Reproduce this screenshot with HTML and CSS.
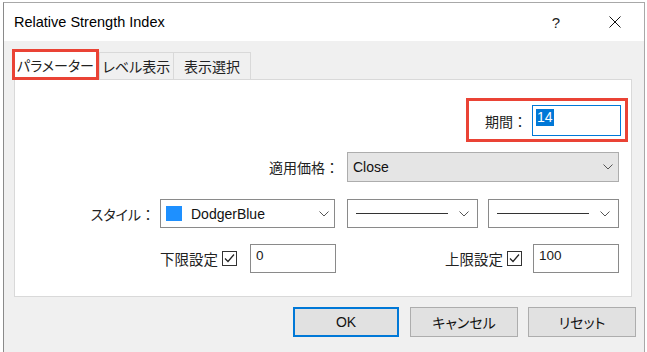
FILE: index.html
```html
<!DOCTYPE html>
<html lang="ja">
<head>
<meta charset="utf-8">
<link rel="stylesheet" href="styles.css">
</head>
<body>
<div class="window">
  <div class="titlebar">
    <span class="title">Relative Strength Index</span>
    <span class="help">?</span>
    <svg class="close" width="12" height="12" viewBox="0 0 12 12"><path d="M0.5 0.5L11.5 11.5M11.5 0.5L0.5 11.5" stroke="#111" stroke-width="1" fill="none"/></svg>
  </div>
  <div class="body">
    <div class="tabs">
      <div class="tab active"><span class="kana">パラメーター</span></div>
      <div class="tab t2"><span class="kana">レベル表示</span></div>
      <div class="tab t3">表示選択</div>
    </div>
    <div class="panel">
      <div class="row row1">
        <div class="mark">
          <span class="label">期間：</span>
          <div class="field period"><span class="sel">14</span></div>
        </div>
      </div>
      <div class="row row2">
        <span class="label">適用価格：</span>
        <div class="combo gray w-close"><span class="val">Close</span>
          <svg class="chev" width="10" height="6" viewBox="0 0 10 6"><path d="M0.5 0.5L5 5L9.5 0.5" stroke="#555" fill="none"/></svg>
        </div>
      </div>
      <div class="row row3">
        <span class="label"><span class="kana">スタイル</span>：</span>
        <div class="combo w-color"><span class="swatch"></span><span class="val">DodgerBlue</span>
          <svg class="chev" width="10" height="6" viewBox="0 0 10 6"><path d="M0.5 0.5L5 5L9.5 0.5" stroke="#555" fill="none"/></svg>
        </div>
        <div class="combo w-line"><span class="line"></span>
          <svg class="chev" width="10" height="6" viewBox="0 0 10 6"><path d="M0.5 0.5L5 5L9.5 0.5" stroke="#555" fill="none"/></svg>
        </div>
        <div class="combo w-line last"><span class="line"></span>
          <svg class="chev" width="10" height="6" viewBox="0 0 10 6"><path d="M0.5 0.5L5 5L9.5 0.5" stroke="#555" fill="none"/></svg>
        </div>
      </div>
      <div class="row row4">
        <div class="group g1">
          <span class="label">下限設定</span>
          <svg class="check" width="15" height="15" viewBox="0 0 15 15"><rect x="0.5" y="0.5" width="14" height="14" fill="#fff" stroke="#333"/><path d="M3 7.5L6 10.5L12 3.5" stroke="#222" stroke-width="1.2" fill="none"/></svg>
          <div class="field num"><span>0</span></div>
        </div>
        <div class="group">
          <span class="label">上限設定</span>
          <svg class="check" width="15" height="15" viewBox="0 0 15 15"><rect x="0.5" y="0.5" width="14" height="14" fill="#fff" stroke="#333"/><path d="M3 7.5L6 10.5L12 3.5" stroke="#222" stroke-width="1.2" fill="none"/></svg>
          <div class="field num"><span>100</span></div>
        </div>
      </div>
    </div>
    <div class="buttons">
      <div class="btn default">OK</div>
      <div class="btn b2"><span class="kana">キャンセル</span></div>
      <div class="btn b3"><span class="kana">リセット</span></div>
    </div>
  </div>
</div>
</body>
</html>
```

FILE: styles.css
```css
* { box-sizing: border-box; }
html, body { margin: 0; padding: 0; background: #fff; }
body {
  font-family: "Liberation Sans", "Noto Sans CJK JP", sans-serif;
  font-size: 14px;
  color: #1a1a1a;
  overflow: hidden;
  height: 352px;
}
.kana { font-feature-settings: "palt"; }
.window {
  margin: 2px 0 0 3px;
  width: 642px;
  height: 350px;
  border: 1px solid #a8a8a8;
  border-left-color: #8a8a8a;
  border-bottom: none;
  background: #f0f0f0;
  display: flex;
  flex-direction: column;
  overflow: hidden;
}
.titlebar {
  height: 38px;
  background: #fff;
  display: flex;
  align-items: center;
  padding: 0 23px 0 10px;
  flex: none;
}
.title { font-size: 14.5px; color: #000; flex: 1; }
.help { font-size: 15px; color: #222; margin-right: 49px; }
.close { display: block; }
.body {
  flex: 1;
  padding: 8px 12px 0 10px;
  display: flex;
  flex-direction: column;
}
.tabs {
  display: flex;
  align-items: flex-start;
  height: 30px;
  margin-left: -2px;
}
.tab {
  display: flex;
  align-items: center;
  justify-content: center;
  height: 27px;
  margin-top: 3px;
  border: 1px solid #d9d9d9;
  border-bottom: none;
  background: #f0f0f0;
  color: #222;
}
.tab.active {
  width: 87px;
  height: 31px;
  margin-top: 0;
  border: 3px solid #ea4335;
  background: #fff;
  position: relative;
  z-index: 1;
  padding-top: 1px;
}
.tab.t2 { width: 75px; }
.tab.t3 { width: 78px; margin-left: -1px; }
.panel {
  height: 218px;
  flex: none;
  background: #fff;
  border: 1px solid #d9d9d9;
  padding: 0 12px 0 0;
  display: flex;
  flex-direction: column;
}
.row {
  display: flex;
  justify-content: flex-end;
  align-items: center;
}
.row1 { margin-top: 18px; margin-right: -9px; }
.mark {
  height: 44px;
  width: 162px;
  border: 3px solid #ea4335;
  padding: 4px 4px 3px 0;
  display: flex;
  justify-content: flex-end;
  align-items: center;
}
.label { color: #222; white-space: nowrap; }
.field {
  background: #fff;
  border: 1px solid #8a8a8a;
  display: flex;
  align-items: flex-start;
}
.period {
  width: 89px;
  height: 31px;
  margin-left: 5px;
  border-color: #0078d7;
  padding: 3px 0 0 3px;
}
.sel {
  background: #0078d7;
  color: #fff;
  padding: 0 1px;
  line-height: 17px;
}
.row2 { margin-top: 10px; height: 30px; }
.row2 .label { margin-right: 8px; }
.combo {
  display: flex;
  align-items: center;
  background: #fff;
  border: 1px solid #8a8a8a;
  height: 100%;
  padding: 0 5px 0 5px;
}
.combo.gray { background: #e5e5e5; border-color: #adadad; }
.combo .val { flex: 1; color: #111; }
.chev { display: block; flex: none; }
.w-close { width: 272px; }
.row3 { margin-top: 17px; height: 29px; }
.row3 .label { margin-right: 5px; }
.w-color { width: 175px; }
.w-line { width: 131px; margin-left: 12px; padding-left: 8px; padding-right: 8px; }
.w-line.last { margin-left: 10px; }
.swatch {
  width: 16px;
  height: 15px;
  background: #1e90ff;
  margin-right: 9px;
  flex: none;
}
.line {
  width: 92px;
  height: 1px;
  background: #333;
  margin-right: auto;
}
.row4 { margin-top: 16px; height: 29px; }
.row4 .label { font-size: 14.5px; }
.group { display: flex; align-items: center; height: 100%; }
.g1 { margin-right: 109px; }
.check { display: block; margin-left: 4px; margin-right: 11px; flex: none; }
.g1 .check { margin-right: 13px; }
.num {
  width: 86px;
  height: 100%;
  padding: 3px 0 0 5px;
  font-size: 13.5px;
}
.buttons {
  display: flex;
  justify-content: flex-end;
  margin: 10px -4px 0 0;
}
.btn {
  height: 30px;
  width: 108px;
  background: #e1e1e1;
  border: 1px solid #adadad;
  display: flex;
  align-items: center;
  justify-content: center;
  color: #111;
}
.btn.default { width: 106px; border: 2px solid #0078d7; }
.btn.b2 { margin-left: 11px; }
.btn.b3 { margin-left: 10px; }
```
